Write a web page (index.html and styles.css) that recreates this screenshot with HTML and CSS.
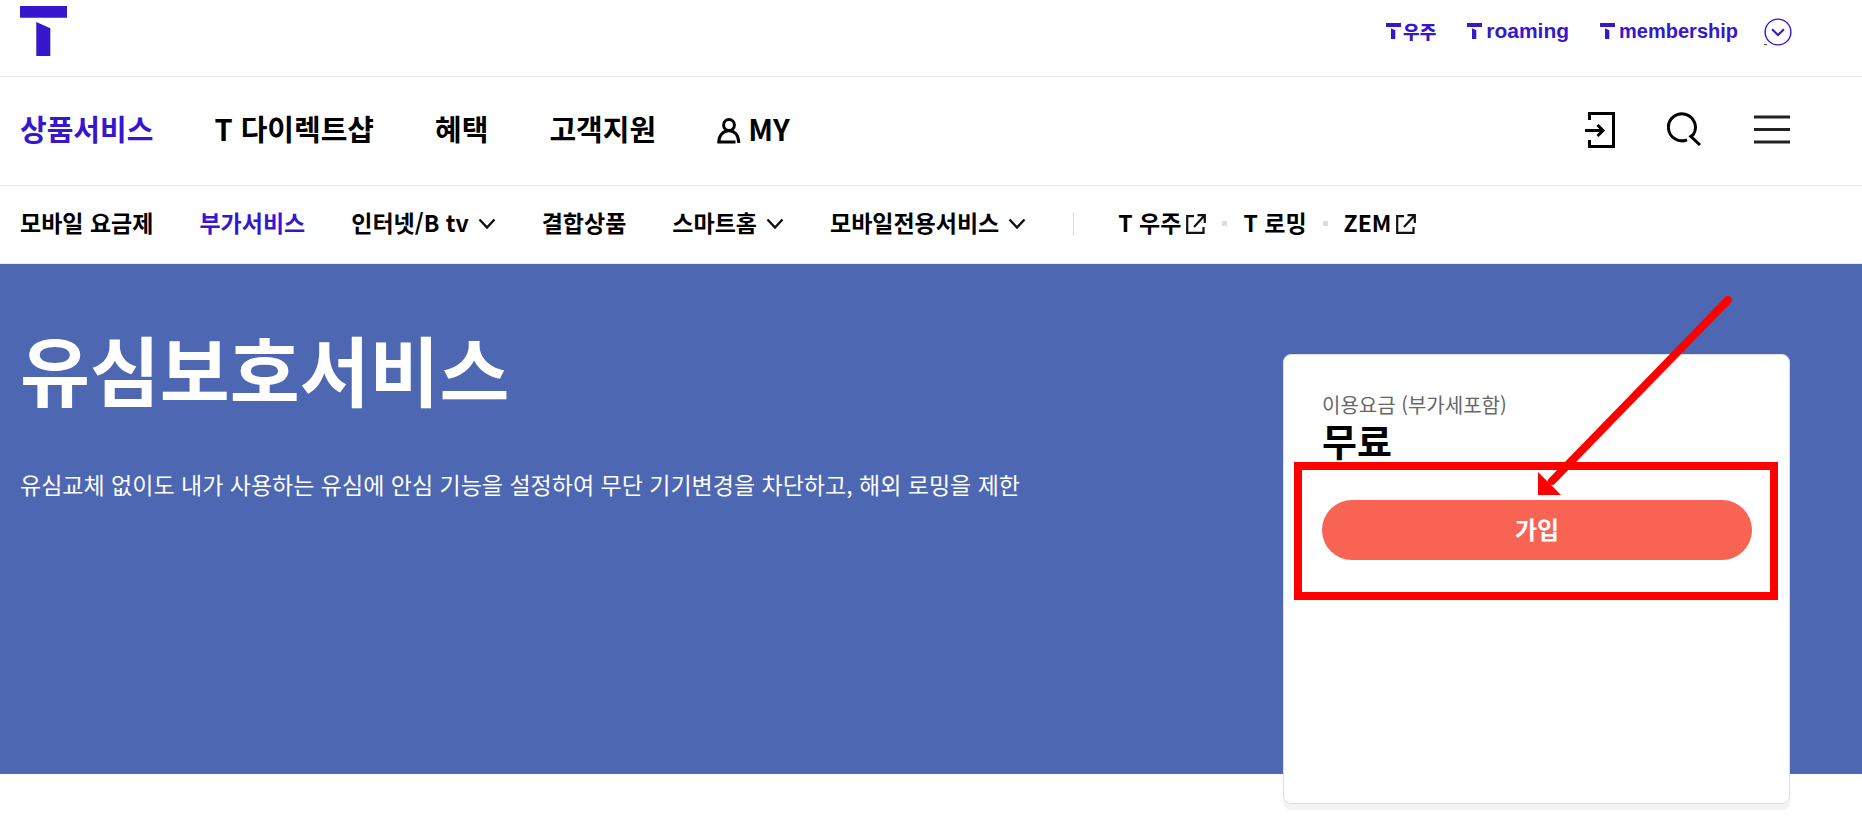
FILE: index.html
```html
<!DOCTYPE html>
<html lang="ko">
<head>
<meta charset="utf-8">
<title>유심보호서비스</title>
<link rel="stylesheet" href="styles.css">
</head>
<body>
<svg class="defs" aria-hidden="true">
  <symbol id="tmark" viewBox="0 0 15 16"><path d="M0 0H15V4H0ZM5 5.3L9.3 7.3V16H5Z"/></symbol>
  <symbol id="chev" viewBox="0 0 18 12"><path d="M1.5 1.5L9 9.5L16.5 1.5"/></symbol>
  <symbol id="ext" viewBox="0 0 20 20"><path d="M8 2.2H1.2V18.8H17.5V13M11.5 1.2H18.8V9M18.3 1.7L8 13"/></symbol>
</svg>
<header>
  <div class="bar top">
    <a class="logo" href="#" aria-label="T world"><svg width="47" height="50" viewBox="0 0 47 50"><path d="M0 0H47V11.7H0ZM16.3 16L30.3 22.3V50H16.3Z"/></svg></a>
    <nav class="family">
      <a class="woozoo" href="#"><svg width="15" height="16"><use href="#tmark"/></svg>우주</a>
      <a href="#"><svg width="15" height="16"><use href="#tmark"/></svg>roaming</a>
      <a class="member" href="#"><svg width="15" height="16"><use href="#tmark"/></svg>membership</a>
      <button class="more" aria-label="더보기"><svg width="28" height="28" viewBox="0 0 28 28"><circle cx="14" cy="14" r="12.9"/><path d="M8 11.3L14 17L20 11.3"/><path class="tick" d="M0 26.6H3"/></svg></button>
    </nav>
  </div>
  <div class="bar main">
    <nav class="gnb">
      <a class="on" href="#">상품서비스</a>
      <a href="#">T 다이렉트샵</a>
      <a href="#">혜택</a>
      <a href="#">고객지원</a>
      <a class="my" href="#"><svg width="24" height="26" viewBox="0 0 24 26"><circle cx="12" cy="7" r="5.4"/><path d="M18.5 24H1.8C1.8 17.5 6 12.7 12 12.7S21.5 17.5 21.8 25"/></svg>MY</a>
    </nav>
    <div class="tools">
      <button aria-label="로그인"><svg width="30" height="36" viewBox="0 0 30 36"><path d="M4.5 8V1.5H28.5V34.5H4.5V28M0 18.5H18M12.5 13L18 18.5L12.5 24"/></svg></button>
      <button aria-label="검색"><svg width="35" height="36" viewBox="0 0 35 36"><path d="M20 27.8A13.5 13.5 0 1 1 26.4 22.4L23.8 24.3L33 33"/></svg></button>
      <button aria-label="전체메뉴"><svg class="burger" width="36" height="36" viewBox="0 0 36 36"><path d="M0 5H36M0 17.5H36M0 30H36"/></svg></button>
    </div>
  </div>
  <div class="bar sub">
    <nav class="lnb">
      <a href="#">모바일 요금제</a>
      <a class="on" href="#">부가서비스</a>
      <a href="#">인터넷/B tv<svg class="chev" width="18" height="12"><use href="#chev"/></svg></a>
      <a href="#">결합상품</a>
      <a href="#">스마트홈<svg class="chev" width="18" height="12"><use href="#chev"/></svg></a>
      <a href="#">모바일전용서비스<svg class="chev" width="18" height="12"><use href="#chev"/></svg></a>
    </nav>
    <nav class="links">
      <a href="#">T 우주<svg width="20" height="20"><use href="#ext"/></svg></a>
      <i></i>
      <a href="#">T 로밍</a>
      <i></i>
      <a href="#">ZEM<svg width="20" height="20"><use href="#ext"/></svg></a>
    </nav>
  </div>
</header>
<main class="hero">
  <section class="intro">
    <h1>유심보호서비스</h1>
    <p>유심교체 없이도 내가 사용하는 유심에 안심 기능을 설정하여 무단 기기변경을 차단하고, 해외 로밍을 제한</p>
  </section>
  <aside class="card">
    <p class="label">이용요금 (부가세포함)</p>
    <strong class="price">무료</strong>
    <button class="join">가입</button>
    <div class="frame"></div>
    <svg class="arrow" width="200" height="206" viewBox="0 0 200 206"><path class="shaft" d="M190 5L14 186"/><path class="head" d="M0 177L23 200H0Z"/></svg>
  </aside>
</main>
</body>
</html>
```

FILE: styles.css
```css
* { box-sizing: border-box; }
body {
  min-height: 100vh;
  margin: 0;
  background: #fff;
  color: #000;
  font-family: "Noto Sans CJK KR", sans-serif;
}
a { color: inherit; text-decoration: none; white-space: nowrap; }
button { padding: 0; border: 0; background: none; font: inherit; }
svg { display: block; flex: none; }
.defs { position: absolute; width: 0; height: 0; }

.bar {
  display: flex;
  align-items: center;
  padding: 0 72px 0 20px;
  border-bottom: 1px solid #ebebeb;
}
.bar .on { color: #3617ce; }

.top { height: 77px; justify-content: space-between; align-items: flex-start; padding-right: 70px; }
.logo { padding-top: 6px; fill: #3617ce; }
.family {
  display: flex;
  align-items: center;
  gap: 31px;
  height: 64px;
  color: #3617ce;
  fill: #3617ce;
  font: bold 21px/24px "Liberation Sans", sans-serif;
}
.family a { display: flex; align-items: center; gap: 4px; padding-bottom: 2px; }
.family .member { font-size: 20px; }
.family .woozoo { gap: 2px; font: 900 18px/24px "Noto Sans CJK KR", sans-serif; }
.more { margin-left: -5px; }
.more svg { fill: none; stroke: #3617ce; stroke-width: 1.4; }
.more path { stroke-width: 2; }
.more .tick { stroke: #333; stroke-width: 1; }

.main { height: 109px; padding-bottom: 2px; justify-content: space-between; }
.gnb { display: flex; gap: 61px; padding-bottom: 4px; font-size: 29px; font-weight: 700; line-height: 42px; }
.my { display: flex; align-items: center; gap: 7px; }
.my svg { margin-top: 6px; fill: none; stroke: #000; stroke-width: 3; }
.tools { display: flex; gap: 52px; }
.tools svg { fill: none; stroke: #000; stroke-width: 3; }
.tools .burger { stroke: #222; }

.sub { height: 78px; padding-bottom: 2px; font-size: 23px; font-weight: 700; line-height: 32px; }
.lnb { display: flex; gap: 46px; padding-bottom: 4px; }
.lnb a, .links a { display: flex; align-items: center; }
.chev { margin: 4px 0 0 9px; fill: none; stroke: #111; stroke-width: 2.4; }
.links {
  display: flex;
  align-items: center;
  gap: 16px;
  height: 24px;
  margin-left: 47px;
  padding-left: 44px;
  border-left: 1px solid #ddd;
}
.links a { padding-bottom: 4px; }
.links svg { margin: 4px 0 0 5px; fill: none; stroke: #111; stroke-width: 2.2; }
.links i { width: 5px; height: 5px; background: #ddd; }

.hero {
  display: flex;
  justify-content: space-between;
  align-items: flex-start;
  height: 510px;
  margin-bottom: 63px;
  padding: 0 72px 0 20px;
  background: #4d67b3;
}
.intro { color: #fff; }
h1 { margin: 48px 0 0; font-size: 76px; font-weight: 700; line-height: 112px; }
.intro p { margin: 43px 0 0; font-size: 23px; line-height: 34px; }

.card {
  position: relative;
  width: 507px;
  height: 450px;
  margin-top: 90px;
  padding: 36px 37px 36px 38px;
  border: 1px solid #dfdfdf;
  border-radius: 8px;
  background: #fff;
  box-shadow: 0 6px 0 #f4f4f4;
}
.label { margin: 0; color: #666; font-size: 20px; line-height: 28px; }
.price { display: block; font-size: 38px; font-weight: 700; line-height: 42px; }
.join {
  display: block;
  width: 100%;
  height: 60px;
  margin-top: 39px;
  padding-bottom: 4px;
  border-radius: 30px;
  background: #f96353;
  color: #fff;
  font-size: 24px;
  font-weight: 700;
}
.frame {
  position: absolute;
  top: 107px;
  left: 10px;
  right: 11px;
  height: 138px;
  border: 8px solid #f00;
}
.arrow { position: absolute; top: -60px; right: 51px; }
.shaft { fill: none; stroke: #f00; stroke-width: 8; stroke-linecap: round; }
.head { fill: #f00; }
```
